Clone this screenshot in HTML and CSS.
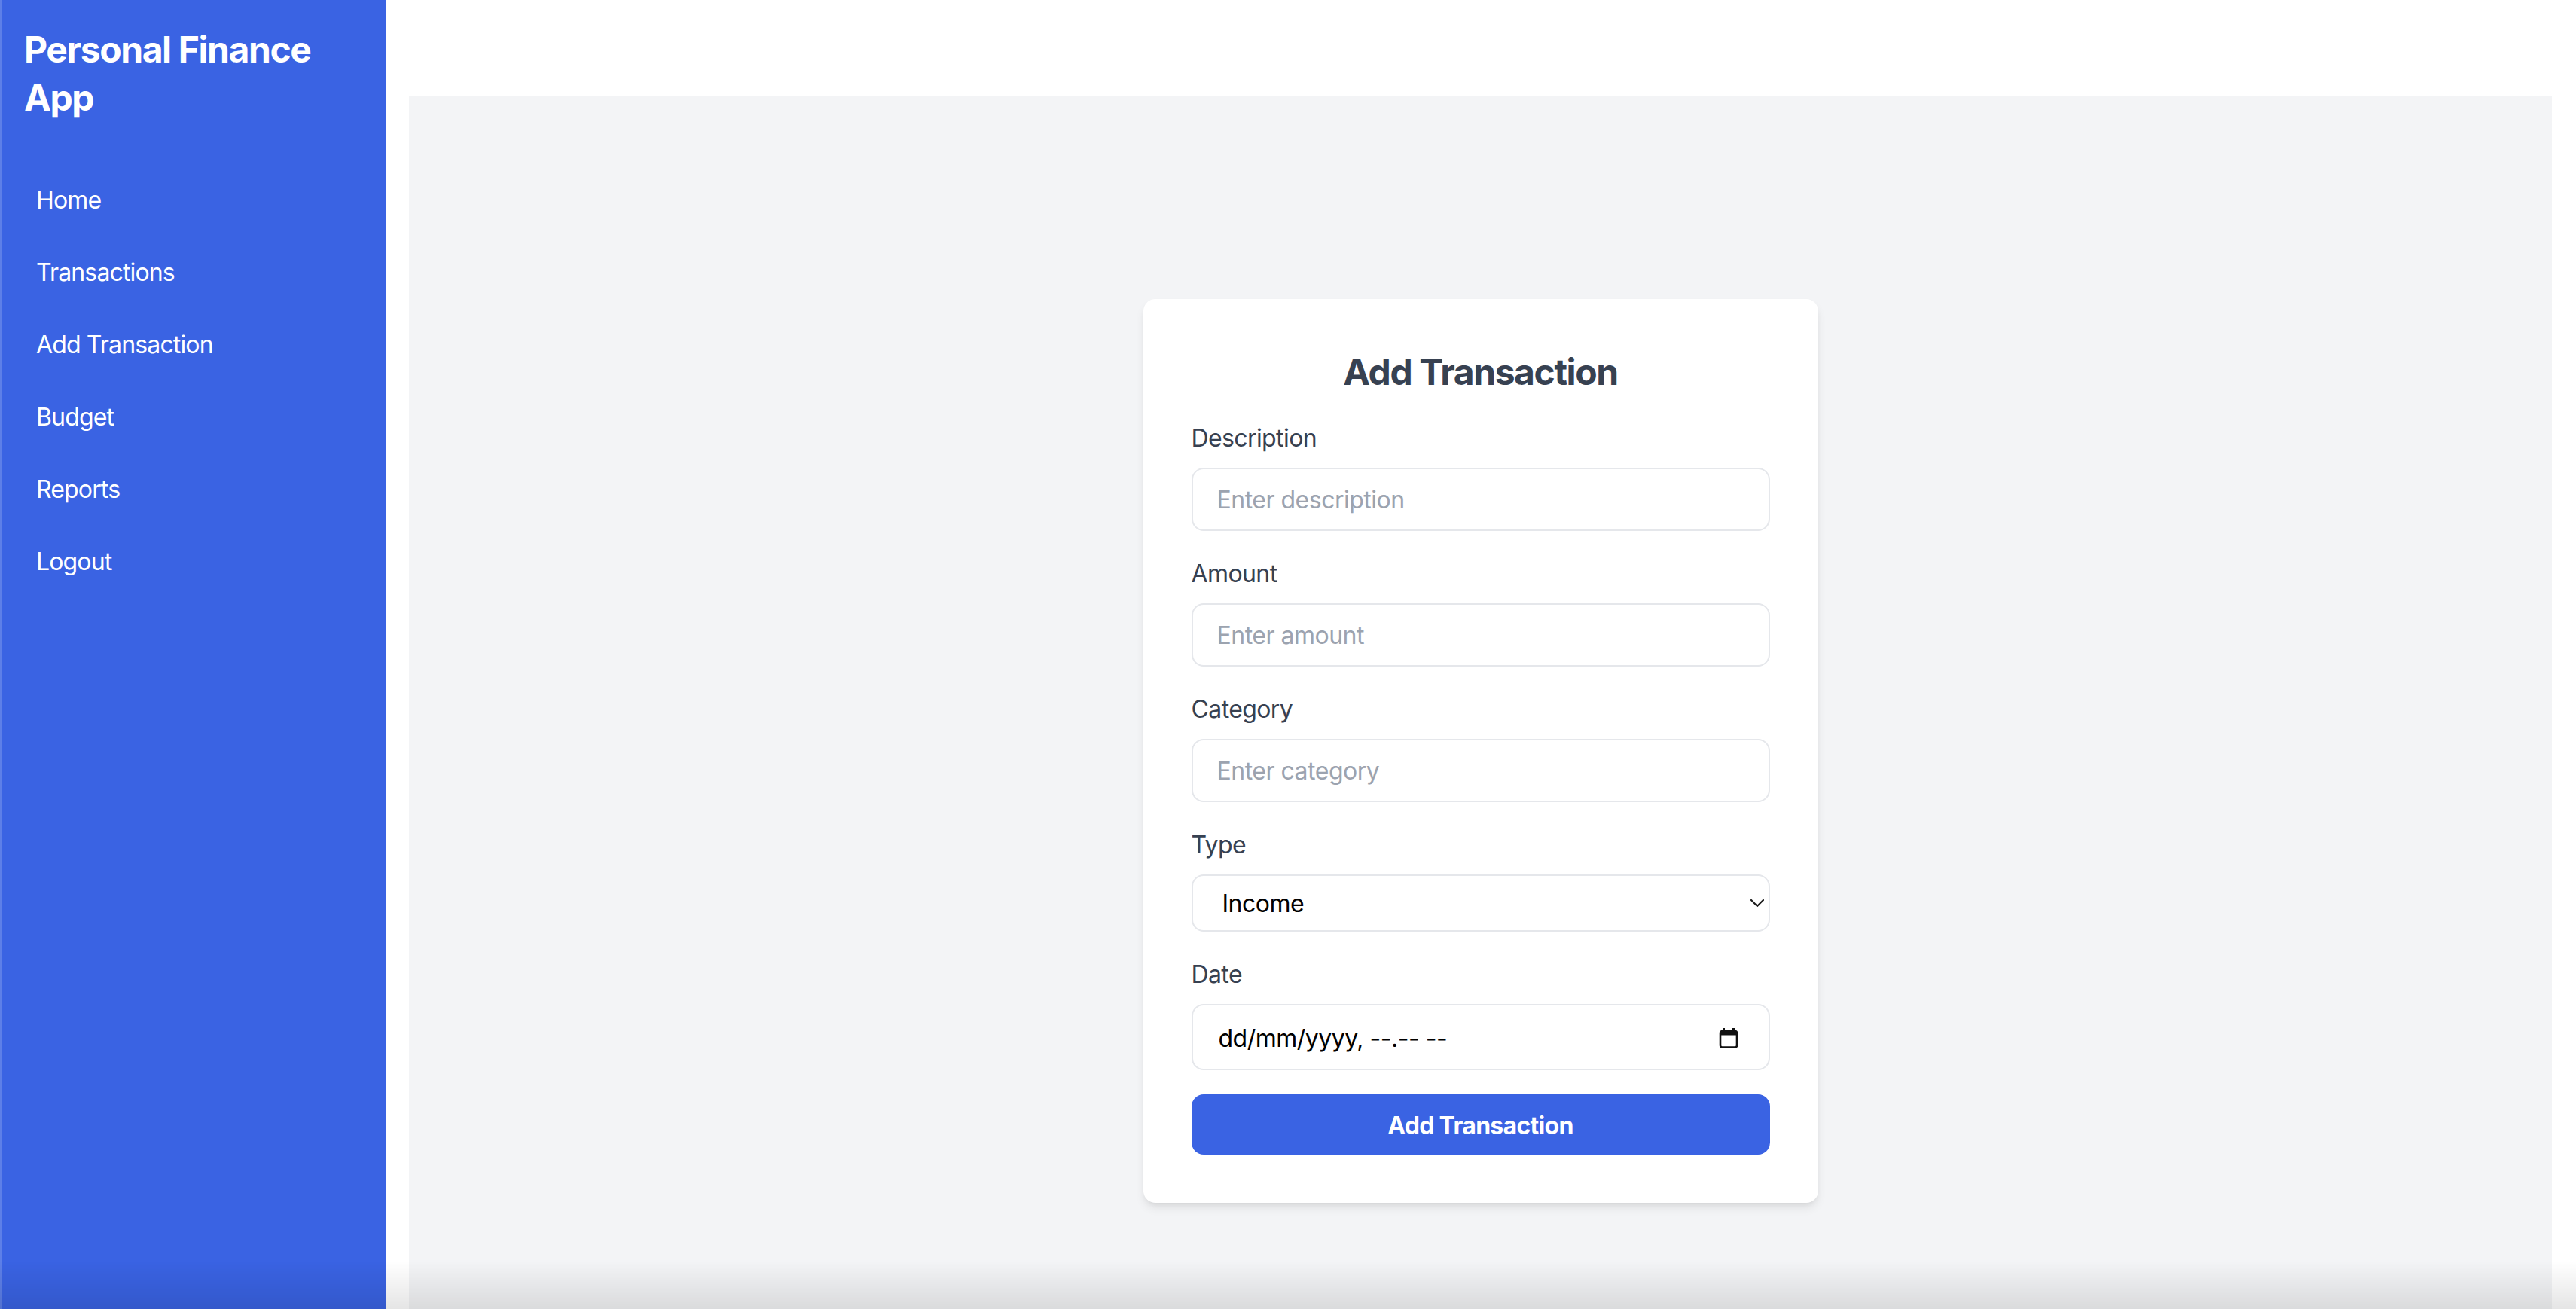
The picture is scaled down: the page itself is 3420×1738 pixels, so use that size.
FILE: index.html
```html
<!DOCTYPE html>
<html lang="en">
<head>
<meta charset="utf-8">
<title>Personal Finance App</title>
<link rel="stylesheet" href="styles.css">
</head>
<body>
<div class="app">
  <aside class="sidebar">
    <h1 class="brand">Personal Finance App</h1>
    <nav class="nav">
      <ul class="nav-list">
        <li><a class="nav-link" href="#">Home</a></li>
        <li><a class="nav-link" href="#">Transactions</a></li>
        <li><a class="nav-link" href="#">Add Transaction</a></li>
        <li><a class="nav-link" href="#">Budget</a></li>
        <li><a class="nav-link" href="#">Reports</a></li>
        <li><a class="nav-link" href="#">Logout</a></li>
      </ul>
    </nav>
  </aside>
  <main class="main">
    <div class="stage">
      <form class="card">
        <h2 class="card-title">Add Transaction</h2>
        <div class="field">
          <label class="label" for="desc">Description</label>
          <input class="control" id="desc" type="text" placeholder="Enter description">
        </div>
        <div class="field">
          <label class="label" for="amount">Amount</label>
          <input class="control" id="amount" type="text" placeholder="Enter amount">
        </div>
        <div class="field">
          <label class="label" for="cat">Category</label>
          <input class="control" id="cat" type="text" placeholder="Enter category">
        </div>
        <div class="field">
          <label class="label" for="type">Type</label>
          <div class="select-wrap">
            <select class="control select" id="type">
              <option>Income</option>
              <option>Expense</option>
            </select>
            <svg class="chevron" width="18" height="10" viewBox="0 0 18 10" aria-hidden="true">
              <path d="M1 1 L9 9 L17 1" fill="none" stroke="#1c1c1c" stroke-width="2.2" stroke-linecap="round" stroke-linejoin="round"/>
            </svg>
          </div>
        </div>
        <div class="field">
          <label class="label">Date</label>
          <div class="control date">
            <span class="date-text">dd/mm/yyyy, --.-- --</span>
            <svg class="cal" width="26" height="28" viewBox="0 0 26 28" aria-hidden="true">
              <rect x="2" y="5" width="22" height="21.5" rx="2.5" fill="none" stroke="#111" stroke-width="2.6"/>
              <rect x="2" y="5" width="22" height="5.5" fill="#111"/>
              <rect x="5" y="1" width="3" height="5" fill="#111"/>
              <rect x="18" y="1" width="3" height="5" fill="#111"/>
            </svg>
          </div>
        </div>
        <button class="submit" type="button">Add Transaction</button>
      </form>
    </div>
  </main>
</div>
<div class="window-shade"></div>
</body>
</html>
```

FILE: styles.css
```css
html, body {
  margin: 0;
  padding: 0;
  background: #ffffff;
  overflow: hidden;
}

body {
  font-family: Inter, "Noto Sans", "Liberation Sans", sans-serif;
  color: #374151;
}

.app {
  display: flex;
  align-items: stretch;
  min-height: 1738px;
}

.sidebar {
  width: 512px;
  flex: 0 0 512px;
  background: #3a63e3;
  color: #ffffff;
  box-shadow: inset 2px 0 0 rgba(255, 255, 255, 0.18);
}

.brand {
  margin: 0;
  padding: 34px 32px 30px;
  font-size: 48px;
  line-height: 64px;
  font-weight: 700;
  letter-spacing: -1.4px;
  color: #ffffff;
}

.nav {
  padding: 34px 32px 32px;
}

.nav-list {
  list-style: none;
  margin: 0;
  padding: 0;
}

.nav-link {
  display: block;
  padding: 16px;
  margin-bottom: 16px;
  font-size: 32px;
  line-height: 48px;
  color: #ffffff;
  text-decoration: none;
  letter-spacing: -0.85px;
}

.main {
  flex: 1;
  padding: 128px 32px 0 31px;
}

.stage {
  background: #f3f4f6;
  min-height: 1738px;
  display: flex;
  align-items: center;
  justify-content: center;
}

.card {
  width: 896px;
  box-sizing: border-box;
  padding: 64px;
  background: #ffffff;
  border-radius: 16px;
  box-shadow: 0 8px 14px -2px rgba(0, 0, 0, 0.09), 0 4px 8px -4px rgba(0, 0, 0, 0.09);
}

.card-title {
  margin: 0 0 32px;
  padding-top: 2px;
  line-height: 62px;
  text-align: center;
  font-size: 48px;
  font-weight: 700;
  letter-spacing: -1.4px;
  color: #374151;
}

.field {
  margin-bottom: 32px;
}

.label {
  display: block;
  margin-bottom: 16px;
  padding-top: 2px;
  font-size: 32px;
  line-height: 46px;
  letter-spacing: -0.6px;
  color: #374151;
}

.control {
  display: block;
  width: 100%;
  height: 84px;
  box-sizing: border-box;
  margin: 0;
  padding: 0 32px;
  border: 2px solid #e5e7eb;
  border-radius: 16px;
  background: #ffffff;
  font-family: Inter, "Noto Sans", "Liberation Sans", sans-serif;
  font-size: 32px;
  letter-spacing: -0.5px;
  color: #111111;
  outline: none;
}

.control::placeholder {
  color: #9ca3af;
}

.select-wrap {
  position: relative;
}

.select {
  height: 76px;
  padding-left: 39px;
  -webkit-appearance: none;
  appearance: none;
  color: #000000;
}

.chevron {
  position: absolute;
  right: 8px;
  top: 33px;
  pointer-events: none;
}

.date {
  height: 88px;
  display: flex;
  align-items: center;
  justify-content: space-between;
  padding: 2px 40px 0 34px;
}

.date-text {
  color: #000000;
  font-size: 32px;
}

.cal {
  display: block;
}

.submit {
  display: block;
  width: 100%;
  height: 80px;
  padding-top: 3px;
  border: none;
  border-radius: 16px;
  background: #3a63e3;
  color: #ffffff;
  font-family: Inter, "Noto Sans", "Liberation Sans", sans-serif;
  font-size: 32px;
  font-weight: 700;
  letter-spacing: -0.7px;
}

.window-shade {
  position: fixed;
  left: 0;
  right: 0;
  bottom: 0;
  height: 64px;
  background: linear-gradient(to bottom, rgba(0, 0, 0, 0), rgba(0, 0, 0, 0.1));
  pointer-events: none;
}
```
